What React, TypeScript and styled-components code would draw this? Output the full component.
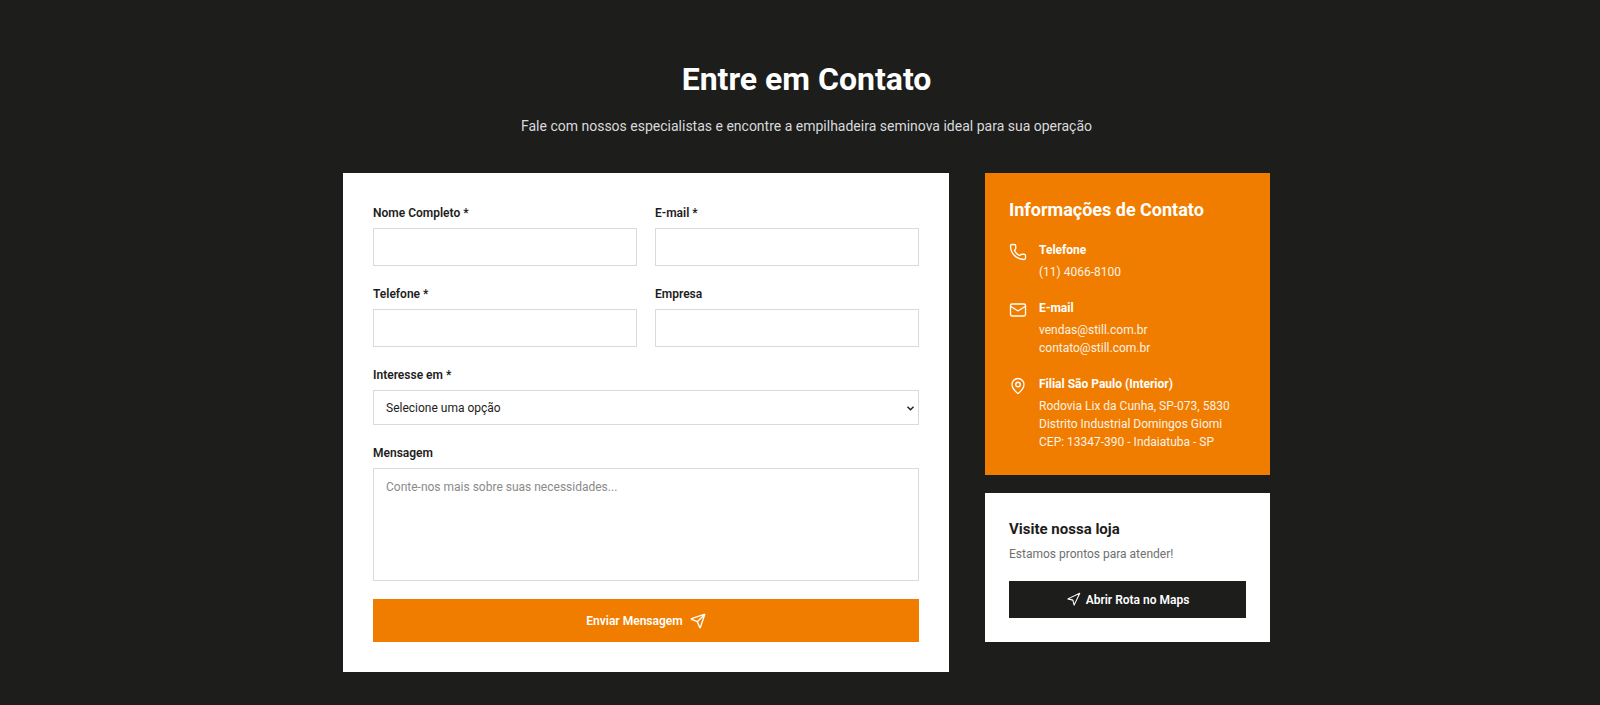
import React from "react";
import styled, { createGlobalStyle, css } from "styled-components";
import { Mail, MapPin, Navigation, Phone, Send } from "lucide-react";

const colors = {
  dark: "#1d1d1b",
  orange: "#f07d00",
  white: "#ffffff",
  border: "#d9dadb",
  muted: "#706f6f",
  subtitle: "#d9dadb",
};

const GlobalStyle = createGlobalStyle`
  *, *::before, *::after { box-sizing: border-box; }
  body {
    margin: 0;
    background: ${colors.dark};
    color: ${colors.dark};
    font-family: Roboto, "Liberation Sans", sans-serif;
    font-size: 12px;
    line-height: 18px;
  }
  h2, h3, h4, p { margin: 0; }
`;

const Section = styled.section`
  padding: 56px 0 32px 13px;
`;

const Container = styled.div`
  width: 100%;
  max-width: 927px;
  margin: 0 auto;
`;

const Header = styled.header`
  display: flex;
  flex-direction: column;
  align-items: center;
  gap: 12px;
  margin-bottom: 34px;
  text-align: center;
`;

const Title = styled.h2`
  color: ${colors.white};
  font-size: 32px;
  font-weight: 700;
  line-height: 46px;
`;

const Subtitle = styled.p`
  color: ${colors.subtitle};
  font-size: 14px;
  line-height: 25px;
`;

const Columns = styled.div`
  display: grid;
  grid-template-columns: repeat(3, minmax(0, 1fr));
  align-items: start;
  gap: 36px;

  @media (max-width: 800px) {
    grid-template-columns: minmax(0, 1fr);
  }
`;

const FormCard = styled.form`
  display: grid;
  grid-template-columns: repeat(2, minmax(0, 1fr));
  gap: 18px;
  grid-column: span 2;
  padding: 30px;
  background: ${colors.white};

  @media (max-width: 800px) {
    grid-column: auto;
  }
`;

const Field = styled.div<{ $wide?: boolean }>`
  display: flex;
  flex-direction: column;
  gap: 5px;
  grid-column: ${(p) => (p.$wide ? "1 / -1" : "auto")};
`;

const Label = styled.label`
  font-weight: 600;
  line-height: 20px;
`;

const control = css`
  width: 100%;
  border: 1px solid ${colors.border};
  border-radius: 0;
  background: ${colors.white};
  color: ${colors.dark};
  font: inherit;

  &:focus {
    outline: none;
    border-color: ${colors.orange};
  }
`;

const Input = styled.input`
  ${control}
  height: 38px;
  padding: 0 12px;
`;

const SelectBox = styled.div`
  position: relative;
  display: flex;

  svg {
    position: absolute;
    top: 16px;
    right: 5px;
    pointer-events: none;
  }
`;

const Select = styled.select`
  ${control}
  height: 35px;
  padding: 0 12px;
  appearance: none;
`;

const TextArea = styled.textarea`
  ${control}
  display: block;
  height: 113px;
  padding: 9px 12px;
  resize: none;

  &::placeholder {
    color: #8a8a8a;
  }
`;

const buttonBase = css`
  display: flex;
  align-items: center;
  justify-content: center;
  width: 100%;
  padding: 0;
  border: 0;
  color: ${colors.white};
  font: inherit;
  font-weight: 600;
  text-decoration: none;
  cursor: pointer;
`;

const SubmitButton = styled.button`
  ${buttonBase}
  grid-column: 1 / -1;
  gap: 7px;
  height: 43px;
  background: ${colors.orange};
`;

const RouteLink = styled.a`
  ${buttonBase}
  gap: 5px;
  height: 37px;
  background: ${colors.dark};
`;

const Sidebar = styled.aside`
  display: flex;
  flex-direction: column;
  gap: 18px;
`;

const InfoCard = styled.div`
  padding: 24px;
  background: ${colors.orange};
  color: ${colors.white};
`;

const InfoTitle = styled.h3`
  margin-bottom: 18px;
  font-size: 18px;
  font-weight: 700;
  line-height: 26px;
`;

const InfoList = styled.div`
  display: flex;
  flex-direction: column;
  gap: 18px;
`;

const InfoItem = styled.div`
  display: flex;
  gap: 12px;

  svg {
    flex: none;
    margin-top: 2px;
  }
`;

const InfoName = styled.h4`
  margin-bottom: 4px;
  font-size: 12px;
  font-weight: 700;
`;

const InfoLine = styled.p`
  opacity: 0.9;
`;

const VisitCard = styled.div`
  padding: 24px;
  background: ${colors.white};
`;

const VisitTitle = styled.h3`
  margin-bottom: 4px;
  font-size: 15px;
  font-weight: 700;
  line-height: 24px;
`;

const VisitText = styled.p`
  margin-bottom: 18px;
  color: ${colors.muted};
`;

const fields = [
  { id: "nome", label: "Nome Completo *", type: "text" },
  { id: "email", label: "E-mail *", type: "email" },
  { id: "telefone", label: "Telefone *", type: "tel" },
  { id: "empresa", label: "Empresa", type: "text" },
];

const contacts = [
  { Icon: Phone, name: "Telefone", lines: ["(11) 4066-8100"] },
  { Icon: Mail, name: "E-mail", lines: ["vendas@still.com.br", "contato@still.com.br"] },
  {
    Icon: MapPin,
    name: "Filial São Paulo (Interior)",
    lines: [
      "Rodovia Lix da Cunha, SP-073, 5830",
      "Distrito Industrial Domingos Giomi",
      "CEP: 13347-390 - Indaiatuba - SP",
    ],
  },
];

export default function App() {
  return (
    <>
      <GlobalStyle />
      <Section>
        <Container>
          <Header>
            <Title>Entre em Contato</Title>
            <Subtitle>
              Fale com nossos especialistas e encontre a empilhadeira seminova ideal para sua operação
            </Subtitle>
          </Header>
          <Columns>
            <FormCard onSubmit={(e: React.FormEvent) => e.preventDefault()}>
              {fields.map((f) => (
                <Field key={f.id}>
                  <Label htmlFor={f.id}>{f.label}</Label>
                  <Input id={f.id} name={f.id} type={f.type} />
                </Field>
              ))}
              <Field $wide>
                <Label htmlFor="interesse">Interesse em *</Label>
                <SelectBox>
                  <Select id="interesse" name="interesse" defaultValue="">
                    <option value="">Selecione uma opção</option>
                  </Select>
                  <svg width="7" height="5" viewBox="0 0 7 5" fill="none" aria-hidden>
                    <path d="M0.5 0.8 3.5 3.8 6.5 0.8" stroke={colors.dark} strokeWidth="1.4" />
                  </svg>
                </SelectBox>
              </Field>
              <Field $wide>
                <Label htmlFor="mensagem">Mensagem</Label>
                <TextArea
                  id="mensagem"
                  name="mensagem"
                  placeholder="Conte-nos mais sobre suas necessidades..."
                />
              </Field>
              <SubmitButton type="submit">
                Enviar Mensagem
                <Send size={16} aria-hidden />
              </SubmitButton>
            </FormCard>
            <Sidebar>
              <InfoCard>
                <InfoTitle>Informações de Contato</InfoTitle>
                <InfoList>
                  {contacts.map(({ Icon, name, lines }) => (
                    <InfoItem key={name}>
                      <Icon size={18} strokeWidth={1.75} aria-hidden />
                      <div>
                        <InfoName>{name}</InfoName>
                        {lines.map((line) => (
                          <InfoLine key={line}>{line}</InfoLine>
                        ))}
                      </div>
                    </InfoItem>
                  ))}
                </InfoList>
              </InfoCard>
              <VisitCard>
                <VisitTitle>Visite nossa loja</VisitTitle>
                <VisitText>Estamos prontos para atender!</VisitText>
                <RouteLink href="#mapa">
                  <Navigation size={15} strokeWidth={1.75} aria-hidden />
                  Abrir Rota no Maps
                </RouteLink>
              </VisitCard>
            </Sidebar>
          </Columns>
        </Container>
      </Section>
    </>
  );
}
